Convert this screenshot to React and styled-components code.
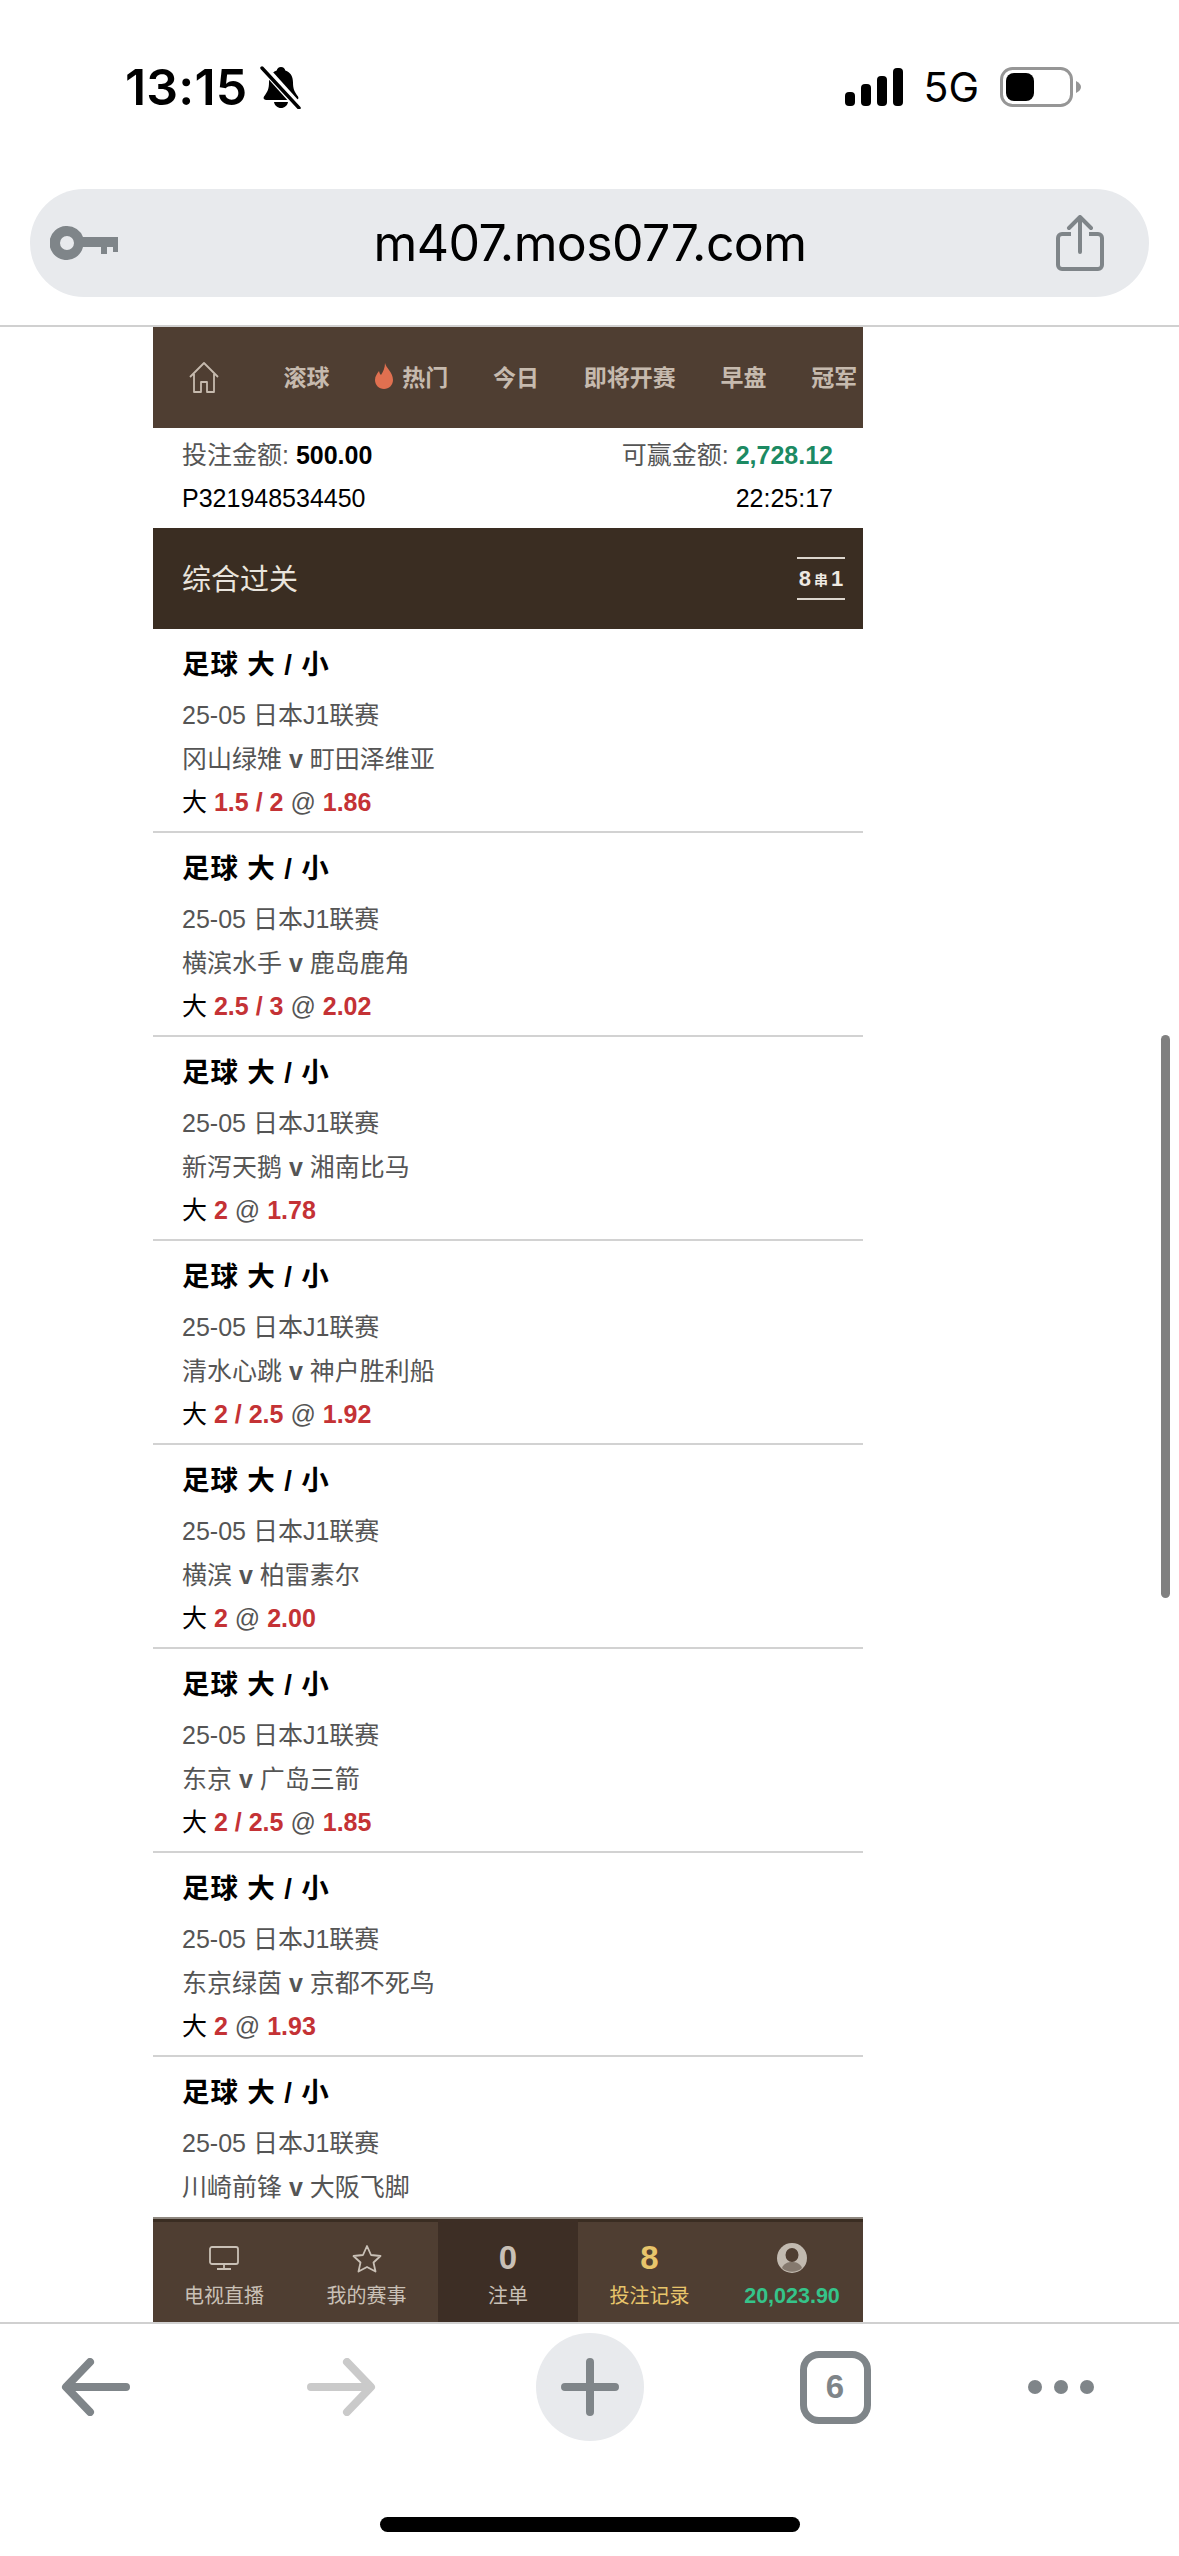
import React from "react";
import styled, { createGlobalStyle } from "styled-components";

const Global = createGlobalStyle`
  html, body { margin: 0; padding: 0; background: #fff; }
  body { font-family: "Liberation Sans", "Noto Sans CJK SC", sans-serif; }
  * { box-sizing: border-box; }
`;

const Page = styled.div`
  position: relative;
  width: 1179px;
  height: 2556px;
  display: flex;
  flex-direction: column;
  overflow: hidden;
  background: #fff;
`;

const BrowserTop = styled.header`
  height: 327px;
  flex: none;
  padding: 0 30px;
  border-bottom: 2px solid #d0d0d0;
`;

const StatusRow = styled.div`
  height: 174px;
  margin-bottom: 15px;
  padding: 0 68px 0 95px;
  display: flex;
  align-items: center;
`;

const Time = styled.span`
  font-family: "Inter", sans-serif;
  font-size: 50px;
  font-weight: 600;
  letter-spacing: 0.2px;
  color: #000;
`;

const Bell = styled.svg`
  width: 42px;
  height: 44px;
  margin-left: 13px;
`;

const Spacer = styled.div`
  flex: 1;
`;

const Signal = styled.svg`
  width: 58px;
  height: 38px;
`;

const Net = styled.span`
  font-family: "Inter", sans-serif;
  font-size: 41px;
  font-weight: 400;
  margin: 0 21px 0 20px;
  color: #000;
`;

const Battery = styled.svg`
  width: 81px;
  height: 40px;
`;

const Address = styled.div`
  height: 108px;
  border-radius: 54px;
  background: #e8eaed;
  padding: 0 45px 0 20px;
  display: flex;
  align-items: center;
`;

const Url = styled.span`
  flex: 1;
  padding-left: 6px;
  text-align: center;
  font-family: "Inter", sans-serif;
  font-size: 50px;
  font-weight: 400;
  letter-spacing: -0.6px;
  color: #000;
`;

const Main = styled.main`
  flex: 1;
  min-height: 0;
  width: 710px;
  margin-left: 153px;
  display: flex;
  flex-direction: column;
`;

const Nav = styled.nav`
  height: 101px;
  flex: none;
  background: #4f3e32;
  display: flex;
  align-items: center;
  overflow: hidden;
  padding: 0 0 4px 36px;
`;

const HomeIcon = styled.svg`
  width: 30px;
  height: 32px;
  flex: none;
  margin: 3px 42px 0 0;
`;

const NavItem = styled.span`
  flex: none;
  padding: 0 22.4px;
  display: flex;
  align-items: center;
  font-size: 23px;
  font-weight: 700;
  color: #c6baae;
  white-space: nowrap;
`;

const Flame = styled.svg`
  width: 20px;
  height: 26px;
  margin-right: 8px;
`;

const Summary = styled.section`
  height: 100px;
  flex: none;
  padding: 6px 30px 0 29px;
  font-size: 25px;
  line-height: 43px;
`;

const SummaryRow = styled.div`
  display: flex;
  justify-content: space-between;
  color: #000;
`;

const Muted = styled.span`
  color: #555;
`;

const Amount = styled.b`
  color: ${(p) => p.$color || "#000"};
`;

const TitleBar = styled.div`
  height: 101px;
  flex: none;
  padding: 0 18px 3px 29px;
  background: #3a2d22;
  display: flex;
  align-items: center;
  justify-content: space-between;
  color: #e9e4dd;
  font-size: 29px;
`;

const ParlayBadge = styled.div`
  width: 48px;
  height: 43px;
  margin-top: 3px;
  border-top: 2px solid #dcd6ce;
  border-bottom: 2px solid #dcd6ce;
  display: flex;
  align-items: center;
  justify-content: center;
  gap: 3px;
  font-size: 22px;
  font-weight: 700;
  color: #eee9e2;
`;

const Chuan = styled.span`
  font-size: 14px;
`;

const List = styled.div`
  flex: 1;
  min-height: 0;
  overflow: hidden;
`;

const Item = styled.article`
  height: 204px;
  padding-top: 14px;
  border-bottom: 2px solid #d2d2d2;
`;

const ItemTitle = styled.h3`
  margin: 0 0 7px;
  padding: 0 29px;
  height: 44px;
  font-size: 27.5px;
  font-weight: 700;
  line-height: 44px;
  letter-spacing: 0.9px;
  color: #000;
`;

const ItemRow = styled.div`
  height: 43.5px;
  padding: 0 29px;
  font-size: 25px;
  line-height: 43.5px;
  color: ${(p) => p.$color || "#555"};
`;

const Red = styled.b`
  color: #c43235;
`;

const Tabs = styled.nav`
  height: 105px;
  flex: none;
  display: grid;
  grid-template-columns: 142px 143px 140px 143px 142px;
  background: #4f3e32;
  border-top: 2px solid #8f8880;
  box-shadow: inset 0 3px 0 #3a2d22;
`;

const Tab = styled.div`
  padding-top: 21px;
  display: flex;
  flex-direction: column;
  align-items: center;
  background: ${(p) => (p.$active ? "#3d2e25" : "transparent")};
  color: ${(p) => p.$color || "#c9c0b6"};
`;

const TabIconBox = styled.div`
  height: 36px;
  display: flex;
  align-items: center;
  justify-content: center;
`;

const TabCount = styled.span`
  font-size: 33px;
  font-weight: 700;
  line-height: 36px;
`;

const TabLabel = styled.span`
  margin-top: 8px;
  font-size: 20px;
  line-height: 24px;
  white-space: nowrap;
`;

const Balance = styled(TabLabel)`
  font-size: 21.5px;
  font-weight: 700;
`;

const BrowserBottom = styled.footer`
  height: 234px;
  flex: none;
  border-top: 2px solid #d0d0d0;
  padding-top: 8px;
`;

const Toolbar = styled.div`
  height: 110px;
  display: grid;
  grid-template-columns: 190px 304px 192px 298px 154px;
  align-items: center;
  justify-items: center;
`;

const PlusCircle = styled.div`
  width: 108px;
  height: 108px;
  border-radius: 50%;
  background: #e8eaed;
  display: flex;
  align-items: center;
  justify-content: center;
`;

const TabCounter = styled.div`
  width: 71px;
  height: 73px;
  border: 7px solid #7f8589;
  border-radius: 19px;
  display: flex;
  align-items: center;
  justify-content: center;
  font-size: 33px;
  font-weight: 700;
  color: #7f8589;
`;

const Dots = styled.div`
  display: flex;
  gap: 12px;
`;

const Dot = styled.i`
  width: 14px;
  height: 14px;
  border-radius: 50%;
  background: #7f8589;
`;

const HomeIndicator = styled.div`
  width: 420px;
  height: 15px;
  margin: 75px auto 0;
  border-radius: 8px;
  background: #000;
`;

const ScrollThumb = styled.div`
  position: absolute;
  left: 1161px;
  top: 1035px;
  width: 9px;
  height: 563px;
  border-radius: 5px;
  background: #808080;
`;

const navItems = ["滚球", "热门", "今日", "即将开赛", "早盘", "冠军"];

const items = [
  { teams: ["冈山绿雉", "町田泽维亚"], line: "1.5 / 2", odds: "1.86" },
  { teams: ["横滨水手", "鹿岛鹿角"], line: "2.5 / 3", odds: "2.02" },
  { teams: ["新泻天鹅", "湘南比马"], line: "2", odds: "1.78" },
  { teams: ["清水心跳", "神户胜利船"], line: "2 / 2.5", odds: "1.92" },
  { teams: ["横滨", "柏雷素尔"], line: "2", odds: "2.00" },
  { teams: ["东京", "广岛三箭"], line: "2 / 2.5", odds: "1.85" },
  { teams: ["东京绿茵", "京都不死鸟"], line: "2", odds: "1.93" },
  { teams: ["川崎前锋", "大阪飞脚"] },
];

const GREY = "#7f8589";

export default function App() {
  return (
    <Page>
      <Global />
      <BrowserTop>
        <StatusRow>
          <Time>13:15</Time>
          <Bell viewBox="0 0 42 44">
            <path d="M21 2c2.4 0 4 1.6 4.3 3.6 5.200 1.600 7.700 6 7.700 12 0 6 1.200 9 5 14 1 1.600 .3 3.400-2 3.400H6c-2.300 0-3-1.800-2-3.400 3.800-5 5-8 5-14 0-6 2.500-10.400 7.700-12C17 3.600 18.600 2 21 2z" fill="#000" />
            <path d="M14 37h14c-.6 3.600-3.500 6-7 6s-6.400-2.400-7-6z" fill="#000" />
            <path d="M3 2l36 40" stroke="#fff" strokeWidth="8" />
            <path d="M2 3l37 40" stroke="#000" strokeWidth="3.400" strokeLinecap="round" />
          </Bell>
          <Spacer />
          <Signal viewBox="0 0 58 38">
            <rect x="0" y="24" width="10" height="14" rx="4" fill="#000" />
            <rect x="16" y="16" width="10" height="22" rx="4" fill="#000" />
            <rect x="32" y="8" width="10" height="30" rx="4" fill="#000" />
            <rect x="48" y="0" width="10" height="38" rx="4" fill="#000" />
          </Signal>
          <Net>5G</Net>
          <Battery viewBox="0 0 81 40">
            <rect x="1.500" y="1.500" width="70" height="37" rx="11" fill="none" stroke="#969696" strokeWidth="3" />
            <rect x="6" y="6" width="28" height="28" rx="8" fill="#000" />
            <path d="M76 14c3 1.500 5 3.500 5 6s-2 4.500-5 6z" fill="#969696" />
          </Battery>
        </StatusRow>
        <Address>
          <svg width="68" height="34" viewBox="0 0 68 34">
            <path fillRule="evenodd" d="M17 0a17 17 0 0 1 16 11h35v15h-5v-5h-6v7h-6v-7H33a17 17 0 1 1-16-21zm0 10a7 7 0 1 0 0 14 7 7 0 0 0 0-14z" fill={GREY} />
          </svg>
          <Url>m407.mos077.com</Url>
          <svg width="48" height="56" viewBox="0 0 48 56" fill="none" stroke={GREY} strokeWidth="4">
            <path d="M24 3v34M13 13L24 2l11 11" strokeLinecap="round" strokeLinejoin="round" />
            <path d="M15 19H6a4 4 0 0 0-4 4v27a4 4 0 0 0 4 4h36a4 4 0 0 0 4-4V23a4 4 0 0 0-4-4h-9" />
          </svg>
        </Address>
      </BrowserTop>

      <Main>
        <Nav>
          <HomeIcon viewBox="0 0 30 32" fill="none" stroke="#c6baae" strokeWidth="1.800">
            <path d="M1 16L15 2l14 14M5 13v18h7V21h6v10h7V13" strokeLinejoin="round" />
          </HomeIcon>
          {navItems.map((label) => (
            <NavItem key={label}>
              {label === "热门" && (
                <Flame viewBox="0 0 20 26">
                  <path d="M11 0c1 5 8 9 8 17 0 5-4 9-9 9s-9-4-9-9c0-4 2-6 4-9 .5 2 1 3 2 4 2-3 4-7 4-12z" fill="#e07050" />
                </Flame>
              )}
              {label}
            </NavItem>
          ))}
        </Nav>

        <Summary>
          <SummaryRow>
            <span>
              <Muted>投注金额: </Muted>
              <Amount>500.00</Amount>
            </span>
            <span>
              <Muted>可赢金额: </Muted>
              <Amount $color="#1c8a63">2,728.12</Amount>
            </span>
          </SummaryRow>
          <SummaryRow>
            <span>P321948534450</span>
            <span>22:25:17</span>
          </SummaryRow>
        </Summary>

        <TitleBar>
          综合过关
          <ParlayBadge>
            8<Chuan>串</Chuan>1
          </ParlayBadge>
        </TitleBar>

        <List>
          {items.map((it) => (
            <Item key={it.teams[0]}>
              <ItemTitle>足球 大 / 小</ItemTitle>
              <ItemRow>25-05 日本J1联赛</ItemRow>
              <ItemRow>
                {it.teams[0]} <b>v</b> {it.teams[1]}
              </ItemRow>
              {it.line && (
                <ItemRow $color="#000">
                  大 <Red>{it.line}</Red> <Muted>@</Muted> <Red>{it.odds}</Red>
                </ItemRow>
              )}
            </Item>
          ))}
        </List>

        <Tabs>
          <Tab>
            <TabIconBox>
              <svg width="30" height="24" viewBox="0 0 30 24" fill="none" stroke="#c9c0b6" strokeWidth="1.800">
                <rect x="1" y="1" width="28" height="17" rx="2" />
                <path d="M15 18v5M8 23h14" />
              </svg>
            </TabIconBox>
            <TabLabel>电视直播</TabLabel>
          </Tab>
          <Tab>
            <TabIconBox>
              <svg width="30" height="29" viewBox="0 0 30 29" fill="none" stroke="#c9c0b6" strokeWidth="1.800">
                <path d="M15 2l4 9 9.500 1-7 6.500 2 9L15 23l-8.500 4.500 2-9-7-6.500 9.500-1z" strokeLinejoin="round" />
              </svg>
            </TabIconBox>
            <TabLabel>我的赛事</TabLabel>
          </Tab>
          <Tab $active>
            <TabCount>0</TabCount>
            <TabLabel>注单</TabLabel>
          </Tab>
          <Tab $color="#e8c56b">
            <TabCount>8</TabCount>
            <TabLabel>投注记录</TabLabel>
          </Tab>
          <Tab $color="#35c48a">
            <TabIconBox>
              <svg width="30" height="30" viewBox="0 0 30 30">
                <circle cx="15" cy="15" r="15" fill="#c2bab0" />
                <ellipse cx="15" cy="12" rx="6.500" ry="7" fill="#4f3e32" />
                <path d="M5 25c2-5 6-6 10-6s8 1 10 6a15 15 0 0 1-20 0z" fill="#85796e" />
              </svg>
            </TabIconBox>
            <Balance>20,023.90</Balance>
          </Tab>
        </Tabs>
      </Main>

      <BrowserBottom>
        <Toolbar>
          <svg width="70" height="58" viewBox="0 0 70 58" fill="none" stroke={GREY} strokeWidth="8" strokeLinecap="round" strokeLinejoin="round">
            <path d="M30 4L6 29l24 25M8 29h58" />
          </svg>
          <svg width="70" height="58" viewBox="0 0 70 58" fill="none" stroke="#cacaca" strokeWidth="8" strokeLinecap="round" strokeLinejoin="round">
            <path d="M40 4l24 25-24 25M62 29H4" />
          </svg>
          <PlusCircle>
            <svg width="58" height="58" viewBox="0 0 58 58" fill="none" stroke={GREY} strokeWidth="8" strokeLinecap="round">
              <path d="M29 4v50M4 29h50" />
            </svg>
          </PlusCircle>
          <TabCounter>6</TabCounter>
          <Dots>
            <Dot />
            <Dot />
            <Dot />
          </Dots>
        </Toolbar>
        <HomeIndicator />
      </BrowserBottom>

      <ScrollThumb />
    </Page>
  );
}
